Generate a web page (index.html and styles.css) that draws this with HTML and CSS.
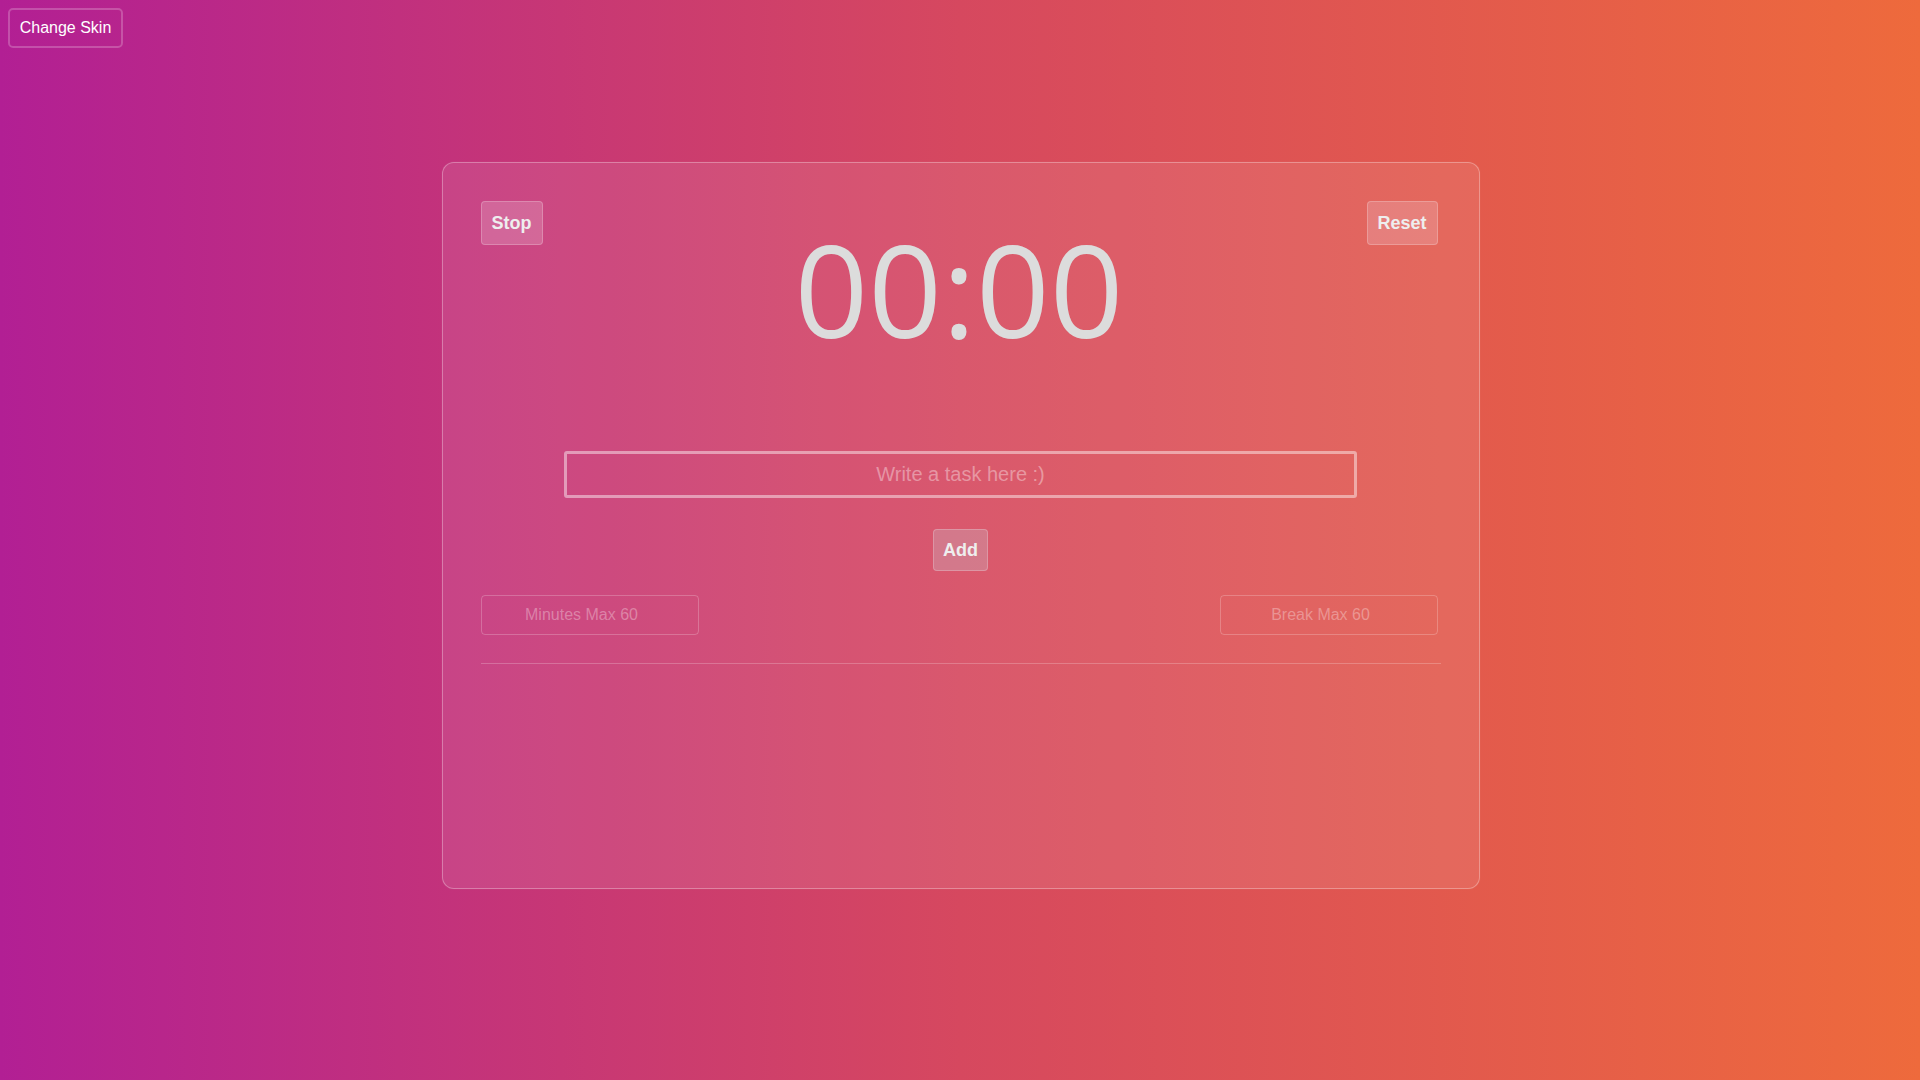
FILE: index.html
```html
<!DOCTYPE html>
<html lang="en">
<head>
<meta charset="utf-8">
<title>Pomodoro</title>
<link rel="stylesheet" href="styles.css">
</head>
<body>
<button class="skin-btn" type="button">Change Skin</button>
<main class="stage">
  <section class="card">
    <div class="top-row">
      <button class="ctl-btn" type="button">Stop</button>
      <div class="timer">00:00</div>
      <button class="ctl-btn reset" type="button">Reset</button>
    </div>
    <div class="task-row">
      <input class="task-input" type="text" placeholder="Write a task here :)">
    </div>
    <div class="add-row">
      <button class="ctl-btn add" type="button">Add</button>
    </div>
    <div class="settings-row">
      <input class="small-input" type="number" placeholder="Minutes Max 60">
      <input class="small-input" type="number" placeholder="Break Max 60">
    </div>
    <hr class="divider">
  </section>
</main>
</body>
</html>
```

FILE: styles.css
```css
html, body {
  margin: 0;
  padding: 0;
  height: 100%;
}

body {
  width: 1920px;
  height: 1080px;
  overflow: hidden;
  font-family: "Liberation Sans", Arial, sans-serif;
  background: linear-gradient(to right, #b21f94 0%, #d6485f 50%, #ee6a3c 100%);
  position: relative;
}

.skin-btn {
  position: absolute;
  left: 8px;
  top: 8px;
  width: 115px;
  height: 40px;
  padding: 0;
  background: transparent;
  border: 2px solid rgba(255, 255, 255, 0.22);
  border-radius: 5px;
  color: #fff;
  font-family: "Liberation Sans", Arial, sans-serif;
  font-size: 16px;
}

.stage {
  display: flex;
  justify-content: center;
  padding-top: 162px;
}

.card {
  box-sizing: border-box;
  width: 1038px;
  height: 727px;
  margin-left: 1px;
  padding: 38px 38px;
  border: 1px solid rgba(255, 255, 255, 0.3);
  border-radius: 12px;
  background: rgba(255, 255, 255, 0.09);
  box-shadow: 0 0 2px rgba(255, 255, 255, 0.08);
}

.top-row {
  display: flex;
  justify-content: space-between;
  align-items: flex-start;
  padding-right: 3px;
  height: 250px;
}

.ctl-btn {
  box-sizing: border-box;
  height: 44px;
  padding: 0 10px;
  background: rgba(240, 220, 230, 0.22);
  border: 1px solid rgba(255, 255, 255, 0.22);
  border-radius: 4px;
  color: #eee;
  font-family: "Liberation Sans", Arial, sans-serif;
  font-weight: bold;
  font-size: 18px;
}

.reset {
  width: 71px;
}

.timer {
  font-family: "Open Sans", sans-serif;
  font-size: 129px;
  line-height: 1;
  color: #dcdcdc;
  margin-top: 23px;
  margin-left: 9px;
}

.task-row {
  display: flex;
  justify-content: center;
}

.task-input {
  box-sizing: border-box;
  width: 793px;
  height: 47px;
  margin-top: 0;
  background: transparent;
  border: 3px solid rgba(255, 255, 255, 0.45);
  border-radius: 3px;
  text-align: center;
  font-family: "Liberation Sans", Arial, sans-serif;
  font-size: 20px;
  color: #fff;
  outline: none;
}

.task-input::placeholder {
  color: rgba(255, 255, 255, 0.38);
}

.add-row {
  display: flex;
  justify-content: center;
  margin-top: 31px;
}

.add {
  width: 55px;
  height: 42px;
  padding: 0;
  background: rgba(200, 200, 210, 0.3);
}

.settings-row {
  display: flex;
  justify-content: space-between;
  margin-top: 24px;
  padding-right: 3px;
}

.small-input {
  box-sizing: border-box;
  width: 218px;
  height: 40px;
  background: transparent;
  border: 1px solid rgba(255, 255, 255, 0.22);
  border-radius: 4px;
  text-align: center;
  font-family: "Liberation Sans", Arial, sans-serif;
  font-size: 16px;
  color: #fff;
  padding: 0 16px 0 0;
  -moz-appearance: textfield;
  appearance: textfield;
}

.small-input::-webkit-inner-spin-button,
.small-input::-webkit-outer-spin-button {
  -webkit-appearance: none;
  margin: 0;
}

.small-input::placeholder {
  color: rgba(255, 255, 255, 0.32);
}

.divider {
  margin: 28px 0 0 0;
  border: 0;
  height: 1px;
  background: rgba(255, 255, 255, 0.22);
}
```
